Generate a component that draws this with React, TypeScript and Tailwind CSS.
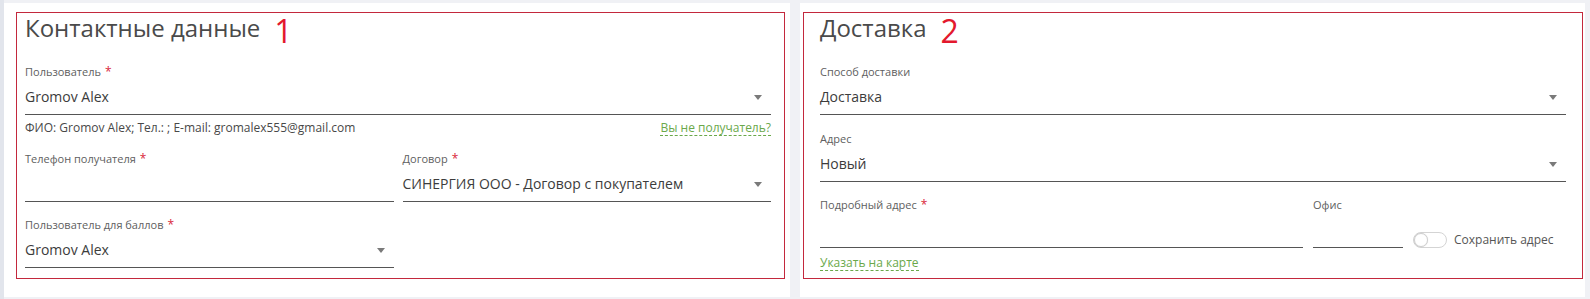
import React from "react";

const Caret = () => (
  <svg width="8" height="5" viewBox="0 0 8 5" className="shrink-0">
    <path d="M0 0H8L4 5Z" fill="#7a7a7a" />
  </svg>
);

function Label({ text, req }: { text: string; req?: boolean }) {
  return (
    <div className="h-[16px] leading-[16px] text-[11px] text-[#606060] whitespace-nowrap">
      {text}
      {req && <span className="ml-[4px] text-[12px] text-[#d9263a]">*</span>}
    </div>
  );
}

function Field({
  label,
  req,
  value,
  select,
  className,
}: {
  label: string;
  req?: boolean;
  value?: string;
  select?: boolean;
  className?: string;
}) {
  return (
    <div className={className}>
      <Label text={label} req={req} />
      <div className="mt-[7px] h-[28px] pb-[7px] border-b border-[#555] flex items-center justify-between">
        <span className="text-[14px] leading-[20px] text-[#3c3c3c] whitespace-nowrap">{value ?? ""}</span>
        {select && (
          <span className="mr-[9px] flex items-center">
            <Caret />
          </span>
        )}
      </div>
    </div>
  );
}

function Header({ title, num }: { title: string; num: string }) {
  return (
    <div className="flex items-start pt-[2px] h-[34px]">
      <div className="mt-[1px] text-[24px] leading-[24px] text-[#4a4a4a] whitespace-nowrap">{title}</div>
      <div className="ml-[14px] text-[32px] leading-[32px] font-normal text-[#e3182d]">{num}</div>
    </div>
  );
}

export default function App() {
  return (
    <div
      className="w-[1590px] h-[299px] bg-[#f0f1f5] flex pt-[3px]"
      style={{ fontFamily: '"Open Sans", "Noto Sans", sans-serif' }}
    >
      <div className="w-[4px] bg-[#e2e5ec] shrink-0 -mt-[3px] h-[299px]" />
      {/* Left card */}
      <div className="w-[786px] h-[294px] bg-white pl-[12px] pt-[9px] shrink-0">
        <div className="w-[769px] h-[267px] border border-[#c3283d] pl-[8px] pr-[13px]">
          <Header title="Контактные данные" num="1" />
          <Field className="mt-[17px]" label="Пользователь" req value="Gromov Alex" select />
          <div className="mt-[5px] flex items-baseline justify-between text-[12px] leading-[16px]">
            <span className="text-[#484848]">ФИО: Gromov Alex; Тел.: ; E-mail: gromalex555@gmail.com</span>
            <span className="inline-block leading-[14px] text-[#6aa84a] border-b border-dashed border-[#6aa84a]">
              Вы не получатель?
            </span>
          </div>
          <div className="mt-[15px] grid grid-cols-2 gap-x-[9px]">
            <Field label="Телефон получателя" req />
            <Field label="Договор" req value="СИНЕРГИЯ ООО - Договор с покупателем" select />
          </div>
          <div className="mt-[15px] grid grid-cols-2 gap-x-[9px]">
            <Field label="Пользователь для баллов" req value="Gromov Alex" select />
            <div />
          </div>
        </div>
      </div>
      <div className="w-[10px] shrink-0" />
      {/* Right card */}
      <div className="w-[785px] h-[294px] bg-white pl-[3px] pt-[9px] shrink-0">
        <div className="w-[780px] h-[267px] border border-[#c3283d] px-[16px]">
          <Header title="Доставка" num="2" />
          <Field className="mt-[17px]" label="Способ доставки" value="Доставка" select />
          <Field className="mt-[16px]" label="Адрес" value="Новый" select />
          <div className="mt-[15px] flex items-end">
            <Field className="w-[483px]" label="Подробный адрес" req />
            <Field className="ml-[10px] w-[90px]" label="Офис" />
            <div className="ml-[10px] flex items-center h-[16px]">
              <div className="relative w-[34px] h-[16px] rounded-full border border-[#d4d4d4] bg-white">
                <div className="absolute left-[0px] top-[0px] w-[14px] h-[14px] rounded-full border border-[#cfcfcf] bg-white shadow-[0_0_1px_rgba(0,0,0,0.15)]" />
              </div>
              <span className="ml-[7px] text-[12px] leading-[16px] text-[#555] whitespace-nowrap">Сохранить адрес</span>
            </div>
          </div>
          <div className="mt-[1px]">
            <span className="inline-block text-[12px] leading-[14px] text-[#6aa84a] border-b border-dashed border-[#6aa84a]">
              Указать на карте
            </span>
          </div>
        </div>
      </div>
    </div>
  );
}
